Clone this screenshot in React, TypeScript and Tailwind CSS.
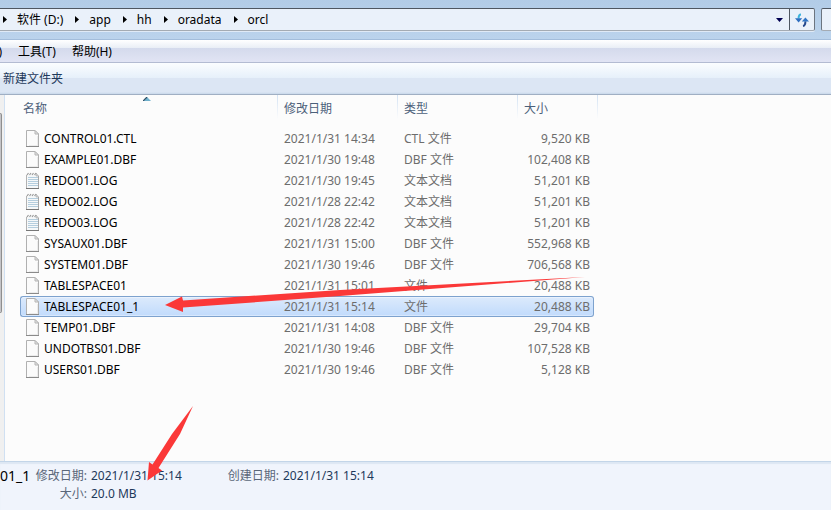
import React from "react";

type FileKind = "blank" | "text";

interface FileEntry {
  name: string;
  date: string;
  type: string;
  size: string;
  kind: FileKind;
  selected?: boolean;
}

const files: FileEntry[] = [
  { name: "CONTROL01.CTL", date: "2021/1/31 14:34", type: "CTL 文件", size: "9,520 KB", kind: "blank" },
  { name: "EXAMPLE01.DBF", date: "2021/1/30 19:48", type: "DBF 文件", size: "102,408 KB", kind: "blank" },
  { name: "REDO01.LOG", date: "2021/1/30 19:45", type: "文本文档", size: "51,201 KB", kind: "text" },
  { name: "REDO02.LOG", date: "2021/1/28 22:42", type: "文本文档", size: "51,201 KB", kind: "text" },
  { name: "REDO03.LOG", date: "2021/1/28 22:42", type: "文本文档", size: "51,201 KB", kind: "text" },
  { name: "SYSAUX01.DBF", date: "2021/1/31 15:00", type: "DBF 文件", size: "552,968 KB", kind: "blank" },
  { name: "SYSTEM01.DBF", date: "2021/1/30 19:46", type: "DBF 文件", size: "706,568 KB", kind: "blank" },
  { name: "TABLESPACE01", date: "2021/1/31 15:01", type: "文件", size: "20,488 KB", kind: "blank" },
  { name: "TABLESPACE01_1", date: "2021/1/31 15:14", type: "文件", size: "20,488 KB", kind: "blank", selected: true },
  { name: "TEMP01.DBF", date: "2021/1/31 14:08", type: "DBF 文件", size: "29,704 KB", kind: "blank" },
  { name: "UNDOTBS01.DBF", date: "2021/1/30 19:46", type: "DBF 文件", size: "107,528 KB", kind: "blank" },
  { name: "USERS01.DBF", date: "2021/1/30 19:46", type: "DBF 文件", size: "5,128 KB", kind: "blank" },
];

const crumbs = ["软件 (D:)", "app", "hh", "oradata", "orcl"];

function CrumbArrow() {
  return (
    <svg width="4" height="7" viewBox="0 0 4 7" className="shrink-0" aria-hidden="true">
      <path d="M0 0L4 3.5L0 7Z" fill="#000" />
    </svg>
  );
}

function RefreshIcon() {
  return (
    <svg width="16" height="16" viewBox="0 0 16 16" aria-hidden="true">
      <path d="M7 2.4C5.2 2.4 4.6 3.8 4.6 6.5" fill="none" stroke="#3cb4dc" strokeWidth="2" />
      <path d="M1 6.3H8.2L4.6 10.4Z" fill="#2f6fc0" />
      <path d="M9 13.9C10.9 13.6 11.4 12 11.4 9.2" fill="none" stroke="#24488c" strokeWidth="2" />
      <path d="M7.8 9.6H15L11.4 5.4Z" fill="#2f74c4" />
    </svg>
  );
}

function FileIcon({ kind }: { kind: FileKind }) {
  if (kind === "text") {
    return (
      <svg width="14" height="17" viewBox="0 0 14 17" className="shrink-0" aria-hidden="true">
        <path d="M1 2.5H13V16H1Z" fill="#f6f8f9" />
        <path d="M0.5 3V16" stroke="#b2b2b2" />
        <path d="M12.5 4V16" stroke="#a6a6a6" />
        <path d="M0 16.5H13" stroke="#777" />
        <path d="M2 5.5H12M2 7.5H12M2 9.5H12M2 11.5H12M2 13.5H12" stroke="#b5cede" />
        <path d="M1 3L2.5 1M3.5 3L5 1M6 3L7.5 1M8.5 3L10 1" stroke="#999" strokeWidth="1.2" />
        <path d="M10 1L12.5 4H10Z" fill="#ddd" stroke="#aaa" strokeWidth="0.7" />
      </svg>
    );
  }
  return (
    <svg width="14" height="17" viewBox="0 0 14 17" className="shrink-0" aria-hidden="true">
      <path d="M0.5 0.5H9L12.5 4V16.5H0.5Z" fill="#fbfbfb" stroke="#b0b0b0" />
      <path d="M9 0.5V4H12.5Z" fill="#e6e6e6" stroke="#b4b4b4" />
      <path d="M3 15.5H12M11.5 6V15" stroke="#ececec" />
      <path d="M0 16.5H13" stroke="#8a8a8a" />
    </svg>
  );
}

function AddressBar() {
  return (
    <div className="flex h-10 items-center gap-1.5 border-b border-[#a3bddb] bg-linear-to-b from-[#b2cce7] to-[#bbd3ec]">
      <div className="flex h-[23px] min-w-0 flex-1 items-stretch rounded-r-xs border border-l-0 border-[#6c7580] border-t-[#4f5761] border-b-[#a4abb3] bg-[#eaf1fa] shadow-[0_1px_0_#e0eaf6]">
        <nav aria-label="地址" className="flex min-w-0 flex-1 items-center gap-2.5 pl-[3px]">
          {crumbs.map((crumb) => (
            <React.Fragment key={crumb}>
              <CrumbArrow />
              <button type="button" className="mr-0.5 whitespace-nowrap">
                {crumb}
              </button>
            </React.Fragment>
          ))}
        </nav>
        <button type="button" aria-label="以前的位置" className="flex w-5 items-center justify-center">
          <svg width="7" height="4" viewBox="0 0 7 4" aria-hidden="true">
            <path d="M0 0H7L3.5 4Z" fill="#000050" />
          </svg>
        </button>
        <button
          type="button"
          aria-label="刷新"
          className="flex w-[25px] items-center justify-center border-l border-[#4f5761]"
        >
          <RefreshIcon />
        </button>
      </div>
      <input
        type="text"
        aria-label="搜索"
        className="h-[23px] w-2.5 shrink-0 rounded-l-xs border border-r-0 border-[#6c7580] border-t-[#4f5761] border-b-[#a4abb3] bg-[#eaf1fa] outline-none"
      />
    </div>
  );
}

function MenuBar() {
  return (
    <div className="flex h-[23px] items-center gap-4 overflow-hidden border-b border-[#b3bbd2] bg-[linear-gradient(to_bottom,#ffffff_0,#e9eef6_8px,#d4daec_8px,#e1e4f4_100%)] pt-0.5">
      <button type="button" aria-label="查看" className="-ml-0.5 w-1 text-right whitespace-nowrap">
        )
      </button>
      <button type="button" className="whitespace-nowrap">工具(T)</button>
      <button type="button" className="whitespace-nowrap">帮助(H)</button>
    </div>
  );
}

function Header({ label, sorted }: { label: string; sorted?: boolean }) {
  return (
    <button
      type="button"
      className={`relative flex h-[27px] w-full items-center text-left text-[#4c607a] ${sorted ? "pl-[3px]" : "pl-1.5"}`}
    >
      {label}
      {sorted && (
        <svg width="8" height="4" viewBox="0 0 8 4" className="absolute top-0.5 right-[127px]" aria-hidden="true">
          <path d="M4 0L8 4H0Z" fill="#6fb0cc" />
          <path d="M4 0L0 4" stroke="#2f4f66" strokeWidth="1.2" />
        </svg>
      )}
      <span className="absolute top-0 right-0 h-6 w-px bg-linear-to-b from-[#d3e2f3] to-transparent" />
    </button>
  );
}

function FileRow({ file }: { file: FileEntry }) {
  const cell = file.selected
    ? "border-y border-[#7da2ce] bg-linear-to-b from-[#dceafc] to-[#c1dbfc] p-0 shadow-[inset_0_1px_0_#eaf2fd,inset_0_-1px_0_#d8e8fd]"
    : "border-y border-transparent p-0";
  return (
    <tr className="h-[21px]" aria-selected={file.selected ? true : undefined}>
      <td className={`${cell} ${file.selected ? "rounded-l-[3px] border-l" : "border-l"}`}>
        <div className="flex items-center gap-1 pl-[5px] text-black">
          <FileIcon kind={file.kind} />
          <span>{file.name}</span>
        </div>
      </td>
      <td className={`${cell} pl-1.5`}>{file.date}</td>
      <td className={`${cell} pl-1.5`}>{file.type}</td>
      <td className={`${cell} ${file.selected ? "rounded-r-[3px] border-r" : "border-r"} text-right`}>
        <div className="pr-[3px]">{file.size}</div>
      </td>
    </tr>
  );
}

function FileTable() {
  return (
    <table className="ml-[15px] w-[578px] table-fixed border-separate border-spacing-0 text-[#6d6d6d]">
      <colgroup>
        <col className="w-[258px]" />
        <col className="w-[120px]" />
        <col className="w-[120px]" />
        <col className="w-[76px]" />
        <col className="w-1" />
      </colgroup>
      <thead>
        <tr>
          <th className="p-0 pb-1.5 font-normal" aria-sort="ascending">
            <Header label="名称" sorted />
          </th>
          <th className="p-0 pb-1.5 font-normal"><Header label="修改日期" /></th>
          <th className="p-0 pb-1.5 font-normal"><Header label="类型" /></th>
          <th className="p-0 pb-1.5 font-normal" colSpan={2}><Header label="大小" /></th>
        </tr>
      </thead>
      <tbody>
        {files.map((file) => (
          <FileRow key={file.name} file={file} />
        ))}
      </tbody>
    </table>
  );
}

function DetailsPane() {
  return (
    <footer className="flex h-[49px] items-start overflow-hidden border-t border-[#c3d5e8] bg-[#f0f4fc] pt-[5px] leading-[18px] whitespace-nowrap text-[#1e395b] shadow-[inset_0_2px_1px_#dde7f3]">
      <h2 className="w-[29px] shrink-0 text-sm leading-[18px] text-black">01_1</h2>
      <dl className="grid grid-cols-[58px_auto] gap-x-1">
        <dt className="text-right text-[#5a6779]">修改日期:</dt>
        <dd>2021/1/31 15:14</dd>
        <dt className="text-right text-[#5a6779]">大小:</dt>
        <dd>20.0 MB</dd>
      </dl>
      <dl className="ml-[46px] flex gap-1">
        <dt className="text-[#5a6779]">创建日期:</dt>
        <dd>2021/1/31 15:14</dd>
      </dl>
    </footer>
  );
}

export default function App() {
  return (
    <div className="relative flex min-h-screen flex-col overflow-hidden bg-[#fcfcfc] font-['Noto_Sans','Noto_Sans_CJK_SC',sans-serif] text-xs leading-4 text-black">
      <AddressBar />
      <MenuBar />
      <div className="flex h-8 items-center border-b border-[#a0afc3] bg-[linear-gradient(to_bottom,#fbfdff_0,#e6f0fa_15px,#dce6f4_15px,#dce6f4_29px,#c8d8ea_100%)] pl-[3px]">
        <button type="button" className="text-[#1e395b]">新建文件夹</button>
      </div>
      <main className="flex flex-1">
        <div className="w-1 shrink-0 bg-[#f0f0f0] pt-[18px]">
          <div className="h-[200px] w-0.5 rounded-r-xs border border-l-0 border-[#8f8f8f] bg-[#c4c4c8]" />
        </div>
        <div className="min-w-0 flex-1 border-l border-[#d0e0f2]">
          <FileTable />
        </div>
      </main>
      <DetailsPane />
      <svg
        width="831"
        height="510"
        viewBox="0 0 831 510"
        className="pointer-events-none absolute top-0 left-0"
        aria-hidden="true"
      >
        <path d="M165 305L182 296.5L183 300.5L340 290L585 277L340 296L183 307.5L183 312Z" fill="#fb3838" />
        <path d="M147.5 480.5L149 462L152.5 464.5L172 434L193 406L180 434L158.5 468L162 470.5Z" fill="#fb3838" />
      </svg>
    </div>
  );
}
